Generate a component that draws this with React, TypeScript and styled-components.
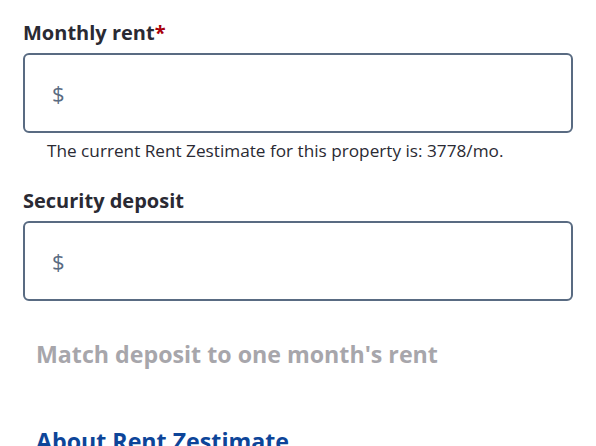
import React from "react";
import styled, { createGlobalStyle } from "styled-components";

const Global = createGlobalStyle`
  html, body { margin: 0; padding: 0; background: #ffffff; }
  body { font-family: "Open Sans", "Noto Sans", sans-serif; color: #2a2a33; }
  * { box-sizing: border-box; }
`;

const Page = styled.div`
  display: flex;
  flex-direction: column;
  padding: 19px 23px 0 23px;
  width: 596px;
  height: 446px;
  overflow: hidden;
`;

const Field = styled.div<{ $gapAfter: number }>`
  display: flex;
  flex-direction: column;
  margin-bottom: ${(p) => p.$gapAfter}px;
`;

const Label = styled.label`
  font-size: 20px;
  line-height: 28px;
  font-weight: 700;
  color: #2a2a33;
  margin-bottom: 6px;
`;

const Required = styled.span`
  color: #a8000b;
`;

const InputBox = styled.div`
  display: flex;
  align-items: center;
  width: 550px;
  height: 80px;
  border: 2px solid #596b82;
  border-radius: 6px;
  padding-left: 27px;
  background: #fff;
`;

const Prefix = styled.span`
  font-size: 22px;
  color: #596b82;
  line-height: 1;
`;

const Input = styled.input`
  flex: 1;
  border: none;
  outline: none;
  background: transparent;
  font-family: inherit;
  font-size: 20px;
  margin-left: 8px;
`;

const Help = styled.p`
  margin: 6px 0 0 24px;
  font-size: 17.2px;
  line-height: 24px;
  color: #2a2a33;
`;

const Toggle = styled.button`
  align-self: flex-start;
  background: none;
  border: none;
  padding: 0;
  margin: 0 0 0 13px;
  font-family: inherit;
  font-size: 23.2px;
  line-height: 30px;
  font-weight: 700;
  color: #a7a6ab;
  cursor: default;
`;

const Link = styled.a`
  margin: 57px 0 0 13px;
  font-size: 23.2px;
  line-height: 30px;
  font-weight: 700;
  color: #0d4599;
  text-decoration: none;
`;

export default function App() {
  return (
    <>
      <Global />
      <Page>
        <Field $gapAfter={24}>
          <Label>
            Monthly rent<Required>*</Required>
          </Label>
          <InputBox>
            <Prefix>$</Prefix>
            <Input aria-label="Monthly rent" />
          </InputBox>
          <Help>The current Rent Zestimate for this property is: 3778/mo.</Help>
        </Field>
        <Field $gapAfter={38}>
          <Label>Security deposit</Label>
          <InputBox>
            <Prefix>$</Prefix>
            <Input aria-label="Security deposit" />
          </InputBox>
        </Field>
        <Toggle>Match deposit to one month's rent</Toggle>
        <Link href="#">About Rent Zestimate</Link>
      </Page>
    </>
  );
}
